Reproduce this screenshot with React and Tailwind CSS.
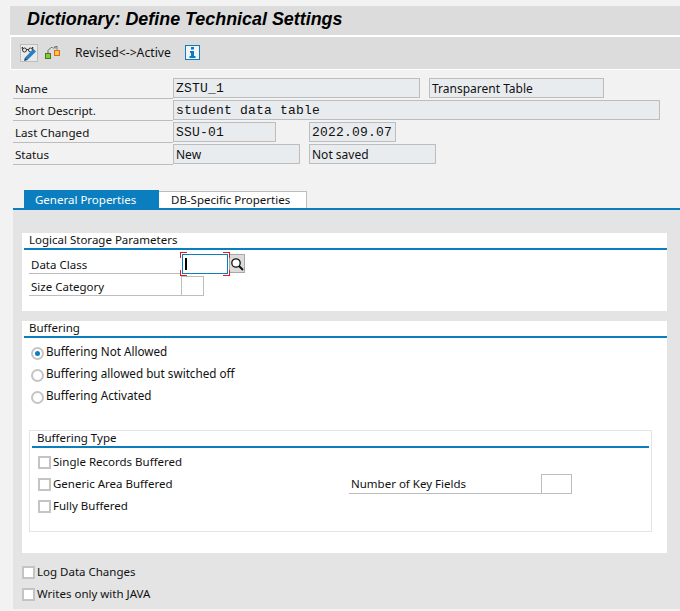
import React from 'react';

const sans = "font-['Noto_Sans','Liberation_Sans',sans-serif]";

const Field = ({ w, ml = '', mono = false, children }) => (
  <div className={`h-5 border border-[#bdbdbd] bg-[#e9ecef] px-[2px] text-[#111] whitespace-nowrap ${mono ? "font-['Liberation_Mono',monospace] text-[13px] leading-[20px] tracking-[0.2px]" : 'text-[12px] leading-[19px]'} ${w} ${ml}`}>
    {children}
  </div>
);

const HeaderRow = ({ label, children }) => (
  <div className="flex h-5 mb-[2px]">
    <div className="w-[160px] ml-[13px] h-[21px] border-b border-[#bdbdbd] pl-[2px] text-[11.6px] leading-[21px] text-[#111]">{label}</div>
    {children}
  </div>
);

const SectionTitle = ({ children, className = '' }) => (
  <div className={`border-b-2 border-[#0a7ebe] text-[11.5px] leading-[14px] text-[#111] ${className}`}>{children}</div>
);

const Radio = ({ checked, label }) => (
  <div className="flex items-center h-[22px]">
    <div className="w-[13px] h-[13px] rounded-full border-2 border-[#c4c4c4] bg-white flex items-center justify-center">
      {checked && <div className="w-[5px] h-[5px] rounded-full bg-[#0a7ebe]" />}
    </div>
    <span className="ml-[2px] -mt-[2px] text-[11.7px] text-[#111]">{label}</span>
  </div>
);

const Check = ({ label }) => (
  <div className="flex items-center h-[22px]">
    <div className="w-[13px] h-[13px] border-2 border-[#c4c4c4] bg-white" />
    <span className="ml-[2px] text-[11.5px] text-[#111]">{label}</span>
  </div>
);

const GlassesIcon = () => (
  <svg width="18" height="18" viewBox="0 0 18 18" fill="none" className="block">
    <rect x="0.5" y="0.5" width="17" height="17" fill="#e9e9e9" stroke="#bdbdbd" />
    <circle cx="4.5" cy="6" r="2" stroke="#333" />
    <circle cx="10.5" cy="6" r="2" stroke="#333" />
    <path d="M6.5 5.5h2M2.5 5.5L2 3.5h1M12.5 5.5l.5-2h-1" stroke="#333" />
    <path d="M5 13.5L13.5 5l2.5 2.5L7.5 16z" fill="#2a7fc0" />
    <path d="M5 13.5L4 17l3.5-1z" fill="#1d3f5c" />
  </svg>
);

const SwitchIcon = () => (
  <svg width="16" height="16" viewBox="0 0 16 16" fill="none" className="block">
    <rect x="0.5" y="8.5" width="5" height="5" fill="#8cc63f" stroke="#3f7f1f" />
    <rect x="9.5" y="5.5" width="5" height="5" fill="#ffc93c" stroke="#e0662a" />
    <path d="M3 8V5.5L6 2.5h1.5M8.5 3.5L10 1.5v2M10.5 1.5h1.5v3" stroke="#666" />
  </svg>
);

const InfoIcon = () => (
  <div className="w-[15px] h-[15px] border border-[#0a7ebe] flex items-center justify-center bg-[#f4f4f4]">
    <svg width="7" height="11" viewBox="0 0 7 11" className="block">
      <rect x="2" y="0" width="3" height="2.5" fill="#0a7ebe" />
      <path d="M1 4h4v5h1.5v2h-6V9H2V6H1z" fill="#0a7ebe" />
    </svg>
  </div>
);

const SearchIcon = () => (
  <svg width="14" height="14" viewBox="0 0 14 14" fill="none" className="block">
    <circle cx="6" cy="6" r="4.2" fill="#fff" stroke="#111" strokeWidth="1.3" />
    <path d="M9 9l4 4" stroke="#111" strokeWidth="2" />
  </svg>
);

const App = () => {
  return (
    <div className={`w-[680px] h-[611px] overflow-hidden bg-[#f2f2f2] ${sans}`}>
      <div className="h-[6px]" />
      <div className="ml-[10px] h-[29px] bg-[#dcdcdc] pl-[17px] font-['Liberation_Sans',sans-serif] text-[17.9px] font-bold italic leading-[27px] text-black">
        Dictionary: Define Technical Settings
      </div>
      <div className="h-[2px] ml-[10px] bg-white" />
      <div className="ml-[10px] h-[33px] border-l border-b border-white bg-[#dcdcdc] flex items-center">
        <div className="ml-[9px]"><GlassesIcon /></div>
        <div className="ml-[7px]"><SwitchIcon /></div>
        <span className="ml-[14px] text-[12.2px] text-[#111]">Revised&lt;-&gt;Active</span>
        <div className="ml-[14px] -mt-[2px]"><InfoIcon /></div>
      </div>

      <div className="pt-[8px]">
        <HeaderRow label="Name">
          <Field w="w-[247px]" mono>ZSTU_1</Field>
          <Field w="w-[175px]" ml="ml-[9px]">Transparent Table</Field>
        </HeaderRow>
        <HeaderRow label="Short Descript.">
          <Field w="w-[487px]" mono>student data table</Field>
        </HeaderRow>
        <HeaderRow label="Last Changed">
          <Field w="w-[103px]" mono>SSU-01</Field>
          <Field w="w-[87px]" ml="ml-[33px]" mono>2022.09.07</Field>
        </HeaderRow>
        <HeaderRow label="Status">
          <Field w="w-[127px]">New</Field>
          <Field w="w-[127px]" ml="ml-[9px]">Not saved</Field>
        </HeaderRow>
      </div>

      <div className="ml-[24px] mt-[26px] flex h-[18px] items-end">
        <div className="w-[135px] h-[18px] bg-[#0a7ebe] pl-[11px] text-[11.5px] leading-[20px] text-white">General Properties</div>
        <div className="w-[148px] h-[17px] border-t border-r border-[#bdbdbd] bg-white pl-[12px] text-[11.5px] leading-[16px] text-[#111]">DB-Specific Properties</div>
      </div>

      <div className="ml-[13px] h-[401px] border-t-2 border-[#0a7ebe] bg-[#e4e4e4] pt-[23px]">
        <div className="ml-[9px] w-[645px] h-[78px] bg-white">
          <SectionTitle className="ml-[2px] pl-[5px] h-[17px]">Logical Storage Parameters</SectionTitle>
          <div className="flex ml-[7px] mt-[4px] h-[20px]">
            <div className="w-[152px] h-[20px] border-b border-[#bdbdbd] pl-[2px] text-[11.5px] leading-[21px] text-[#111]">Data Class</div>
            <div className="relative z-10 ml-[1px] w-[46px] h-[20px] border border-[#0a7ebe] bg-white">
              <div className="absolute left-[2px] top-[3px] w-[2px] h-[12px] bg-black" />
              <div className="absolute -left-[3px] -top-[3px] w-[7px] h-[6px] border-l border-t border-[#e0201c]" />
              <div className="absolute -right-[3px] -top-[3px] w-[7px] h-[6px] border-r border-t border-[#e0201c]" />
              <div className="absolute -left-[3px] -bottom-[3px] w-[7px] h-[6px] border-l border-b border-[#e0201c]" />
              <div className="absolute -right-[3px] -bottom-[3px] w-[7px] h-[6px] border-r border-b border-[#e0201c]" />
            </div>
            <div className="ml-[1px] w-[16px] h-[19px] border border-[#a8a8a8] bg-[#dcdcdc] flex items-center justify-center"><SearchIcon /></div>
          </div>
          <div className="flex ml-[7px] mt-[2px] h-[20px]">
            <div className="w-[152px] h-[20px] border-b border-[#bdbdbd] pl-[2px] text-[11.5px] leading-[21px] text-[#111]">Size Category</div>
            <div className="w-[23px] h-[20px] border border-[#bdbdbd] bg-white" />
          </div>
        </div>

        <div className="ml-[9px] mt-[10px] w-[645px] h-[232px] bg-white">
          <SectionTitle className="ml-[2px] pl-[5px] h-[17px]">Buffering</SectionTitle>
          <div className="ml-[9px] mt-[4px]">
            <Radio checked label="Buffering Not Allowed" />
            <Radio label="Buffering allowed but switched off" />
            <Radio label="Buffering Activated" />
          </div>
          <div className="ml-[7px] mt-[22px] w-[623px] h-[102px] border border-[#e4e4e4]">
            <SectionTitle className="mx-[2px] pl-[5px] h-[17px]">Buffering Type</SectionTitle>
            <div className="flex">
              <div className="ml-[8px] mt-[3px] w-[311px]">
                <Check label="Single Records Buffered" />
                <Check label="Generic Area Buffered" />
                <Check label="Fully Buffered" />
              </div>
              <div className="mt-[26px] flex h-[20px]">
                <div className="w-[192px] h-[20px] border-b border-[#bdbdbd] pl-[2px] text-[11.5px] leading-[20px] text-[#111]">Number of Key Fields</div>
                <div className="w-[31px] h-[20px] border border-[#bdbdbd] bg-white" />
              </div>
            </div>
          </div>
        </div>

        <div className="ml-[9px] mt-[8px]">
          <Check label="Log Data Changes" />
          <Check label="Writes only with JAVA" />
        </div>
      </div>
    </div>
  );
};

export default App;
